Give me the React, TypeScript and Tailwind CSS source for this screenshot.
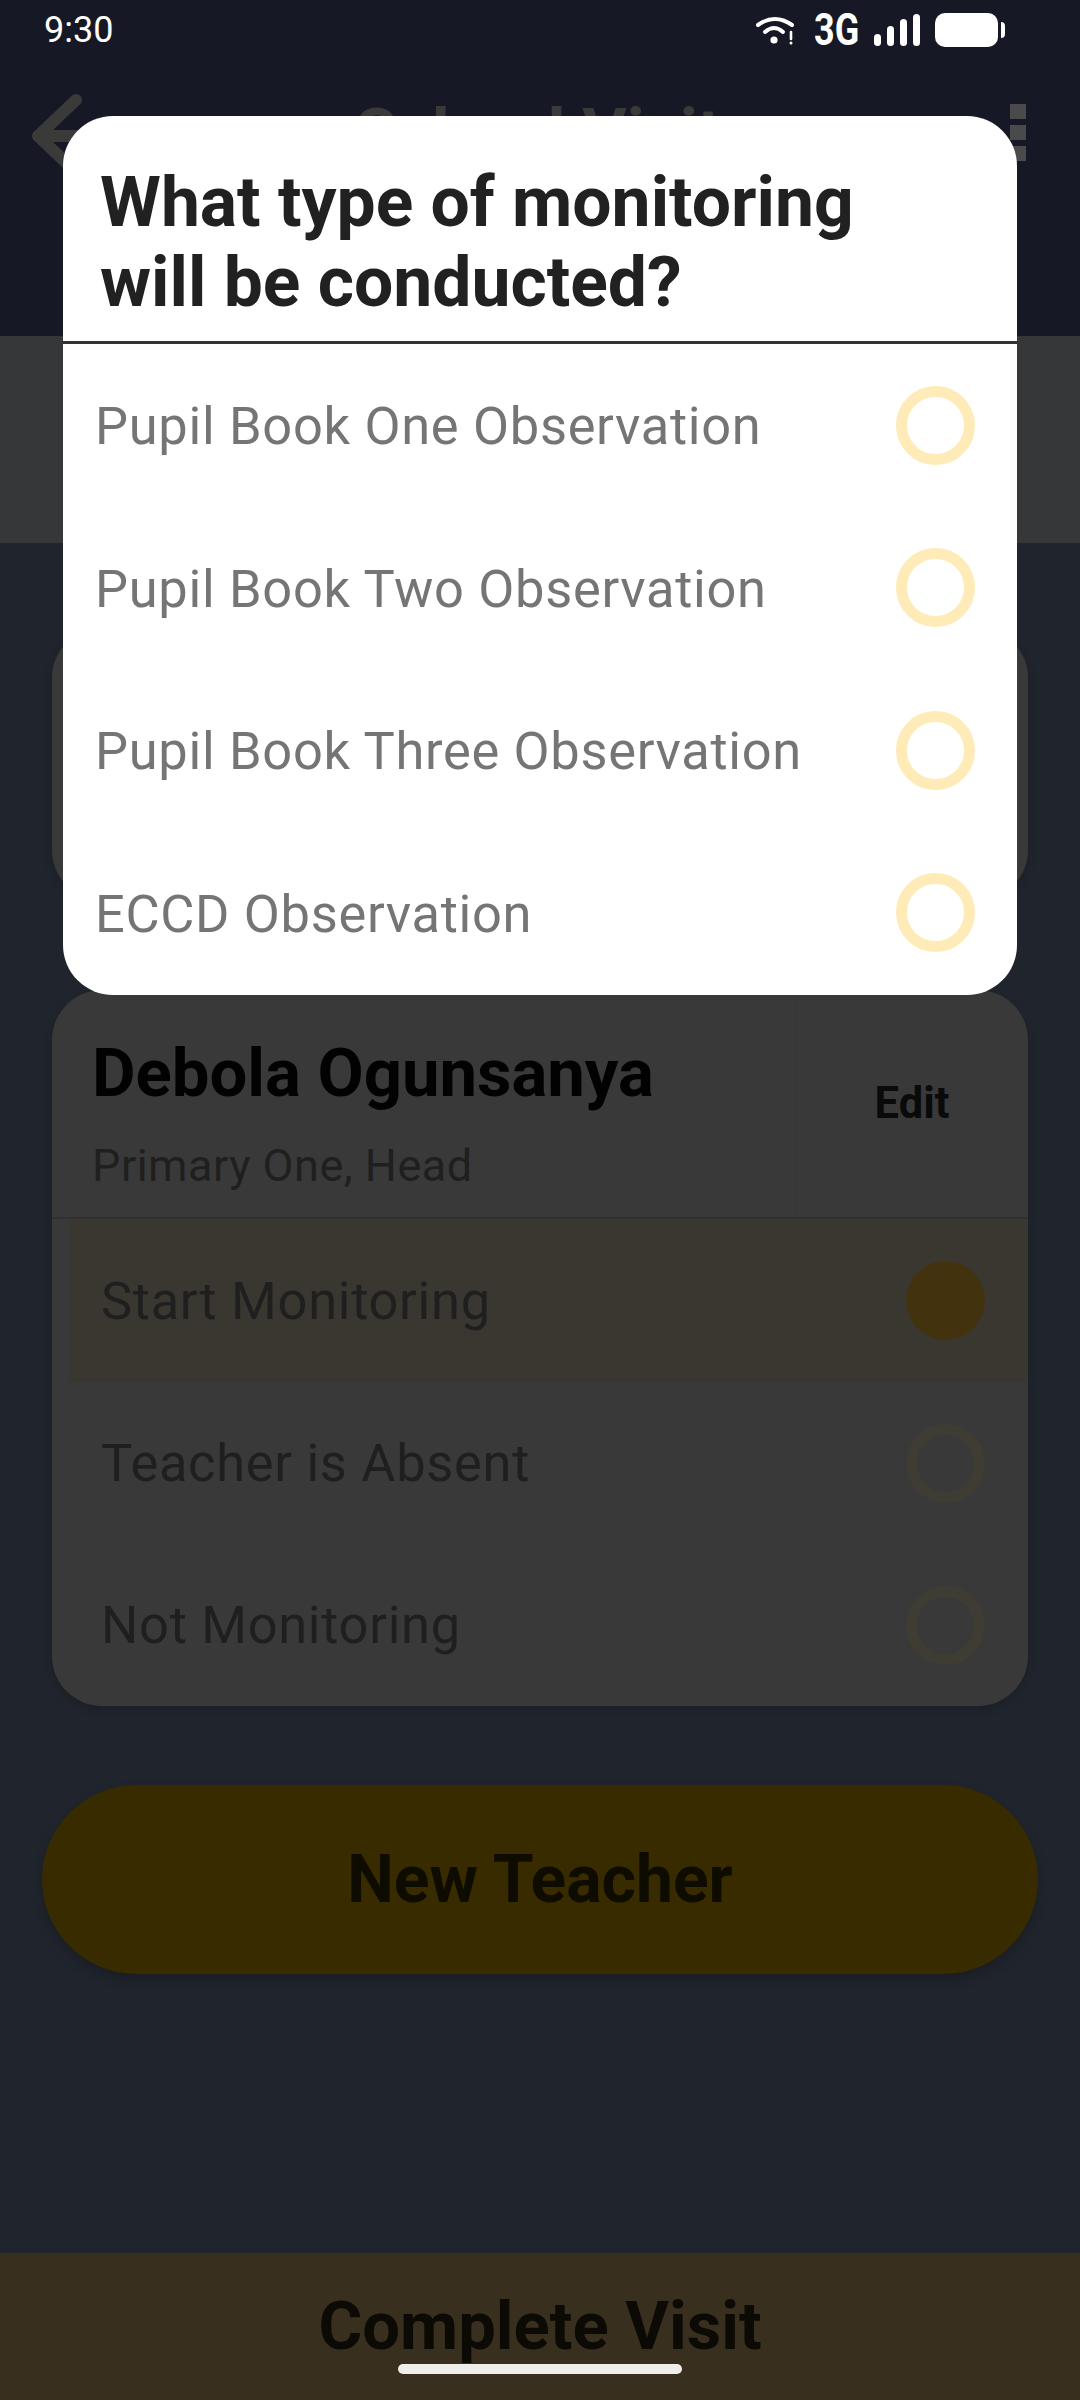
import React from "react";

const font = "font-['Roboto',sans-serif]";

function Ring({ dim }: { dim?: boolean }) {
  return (
    <div
      className={
        dim
          ? "w-[79px] h-[79px] rounded-full border-[11px] border-[#3e3c33]"
          : "w-[79px] h-[79px] rounded-full border-[11px] border-[#ffebb8]"
      }
    />
  );
}

function ModalOption({ label }: { label: string }) {
  return (
    <div className="h-[162.5px] flex items-center justify-between pl-[32px] pr-[42px]">
      <span className="mt-[2px] text-[52.4px] leading-[60px] tracking-[0.7px] text-[#757575]">{label}</span>
      <Ring />
    </div>
  );
}

function CardRow({ label, active }: { label: string; active?: boolean }) {
  return (
    <div
      className={
        active
          ? "h-[163px] ml-[17px] flex items-center justify-between pl-[32px] pr-[43px] bg-[#393730]"
          : "h-[162px] ml-[17px] flex items-center justify-between pl-[32px] pr-[43px]"
      }
    >
      <span className="text-[52.4px] leading-[60px] tracking-[0.7px] text-[#1f1f1f]">{label}</span>
      {active ? <div className="w-[79px] h-[79px] rounded-full bg-[#43320e]" /> : <Ring dim />}
    </div>
  );
}

function StatusIcons() {
  return (
    <div className="flex items-center">
      <svg width="40" height="30" viewBox="0 0 40 30" fill="none" className="mr-[19px]">
        <path d="M3 10 Q20 -2 37 10" stroke="#fff" strokeWidth="4" strokeLinecap="round" />
        <path d="M10 17 Q19 9 28 17" stroke="#fff" strokeWidth="4" strokeLinecap="round" />
        <circle cx="19" cy="25" r="3.6" fill="#fff" />
        <path d="M36 17 V24" stroke="#fff" strokeWidth="2.6" strokeLinecap="round" />
        <circle cx="36" cy="28" r="1.5" fill="#fff" />
      </svg>
      <span className="w-[45px] mr-[15px] whitespace-nowrap origin-left scale-x-[0.8] text-[45px] leading-[44px] font-bold text-white">
        3G
      </span>
      <div className="flex items-end gap-[6px] h-[32px] mr-[15px]">
        <div className="w-[7px] h-[12px] rounded-full bg-white" />
        <div className="w-[7px] h-[20px] rounded-full bg-white" />
        <div className="w-[7px] h-[27px] rounded-full bg-white" />
        <div className="w-[7px] h-[32px] rounded-full bg-white" />
      </div>
      <div className="w-[63px] h-[34px] rounded-[10px] bg-white" />
      <div className="w-[4px] h-[16px] ml-[3px] rounded-r-full bg-white" />
    </div>
  );
}

export default function App() {
  return (
    <div className={`${font} relative w-[1080px] h-[2400px] overflow-hidden bg-[#20242c] flex flex-col`}>
      {/* App bar */}
      <div className="h-[336px] shrink-0 bg-[#161925]">
        <div className="h-[60px] pl-[44px] pr-[75px] flex items-center justify-between">
          <span className="text-[36px] leading-[40px] text-white">9:30</span>
          <StatusIcons />
        </div>
        <div className="mt-[32px] pl-[30px] pr-[54px] h-[80px] flex items-center justify-between">
          <svg width="84" height="84" viewBox="0 0 84 84" fill="none" className="shrink-0">
            <path d="M46 10 L8 46 L46 82 M8 46 H82" stroke="#3a3a38" strokeWidth="12" strokeLinecap="round" strokeLinejoin="round" />
          </svg>
          <span className="mt-[4px] mr-[48px] text-[68px] leading-[70px] font-bold text-[#3a3a3a]">School Visit</span>
          <div className="flex flex-col gap-[6px] shrink-0">
            <div className="w-[16px] h-[15px] bg-[#4a4a4a]" />
            <div className="w-[16px] h-[15px] bg-[#4a4a4a]" />
            <div className="w-[16px] h-[15px] bg-[#4a4a4a]" />
          </div>
        </div>
      </div>

      {/* Band under the bar */}
      <div className="h-[207px] shrink-0 bg-[#363738]" />

      {/* Content */}
      <div className="flex-1 pt-[85px]">
        <div className="mx-[52px] h-[272px] rounded-[50px] bg-[#393939] shadow-[0_4px_10px_rgba(0,0,0,0.15)]" />

        <div className="mx-[52px] mt-[90px] rounded-[50px] bg-[#393939] overflow-hidden shadow-[0_4px_10px_rgba(0,0,0,0.15)]">
          <div className="h-[229px] flex border-b-2 border-[#313131]">
            <div className="flex-1 pl-[40px] pt-[48px] border-r border-[#373737]">
              <div className="text-[67px] leading-[70px] font-bold text-[#020202]">Debola Ogunsanya</div>
              <div className="mt-[33px] text-[45px] leading-[50px] tracking-[0.5px] text-[#1f1f1f]">Primary One, Head</div>
            </div>
            <div className="w-[232px] flex items-center justify-center text-[43.5px] font-bold text-[#0a0a0a]">Edit</div>
          </div>
          <CardRow label="Start Monitoring" active />
          <CardRow label="Teacher is Absent" />
          <CardRow label="Not Monitoring" />
        </div>

        <div className="mx-[42px] mt-[79px] h-[189px] rounded-full bg-[#382b00] shadow-[0_6px_12px_rgba(0,0,0,0.2)] flex items-center justify-center text-[66px] font-bold text-[#0e0b00]">
          New Teacher
        </div>
      </div>

      {/* Footer */}
      <div className="h-[147px] shrink-0 bg-[#382f1e] flex justify-center pt-[37px] text-[67px] leading-[72px] font-bold text-[#0c0a04]">
        Complete Visit
      </div>
      <div className="absolute left-[398px] top-[2364px] w-[284px] h-[10px] rounded-full bg-[#f0eeea]" />

      {/* Dialog */}
      <div className="absolute left-[63px] top-[116px] w-[954px] h-[879px] rounded-[50px] bg-white overflow-hidden">
        <div className="h-[228px] pl-[37px] pt-[46px] border-b-[3px] border-[#333333]">
          <div className="text-[69.6px] leading-[80px] font-bold text-[#212121]">
            What type of monitoring
            <br />
            will be conducted?
          </div>
        </div>
        <ModalOption label="Pupil Book One Observation" />
        <ModalOption label="Pupil Book Two Observation" />
        <ModalOption label="Pupil Book Three Observation" />
        <ModalOption label="ECCD Observation" />
      </div>
    </div>
  );
}
